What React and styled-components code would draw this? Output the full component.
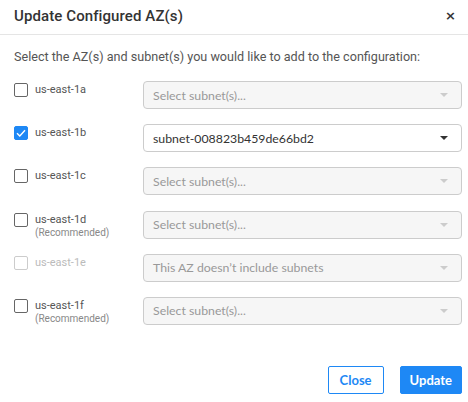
import React from "react";
import styled, { createGlobalStyle } from "styled-components";

const Global = createGlobalStyle`
  html, body { margin: 0; padding: 0; background: #fff; }
  body { font-family: Roboto, "Liberation Sans", sans-serif; }
  * { box-sizing: border-box; }
`;

const Modal = styled.div`
  width: 468px;
  height: 402px;
  display: flex;
  flex-direction: column;
  background: #fff;
`;

const Header = styled.div`
  height: 35px;
  display: flex;
  align-items: center;
  justify-content: space-between;
  padding: 0 12px 3px 14px;
  border-bottom: 1px solid #e5e5e5;
`;

const Title = styled.h1`
  margin: 0;
  font-family: Roboto, sans-serif;
  font-weight: 500;
  font-size: 15px;
  color: #333;
  letter-spacing: 0.1px;
`;

const CloseX = styled.span`
  font-family: "DejaVu Sans", sans-serif;
  font-size: 13px;
  color: #333;
  font-weight: bold;
  line-height: 1;
`;

const Body = styled.div`
  padding: 14px 6px 0 14px;
  display: flex;
  flex-direction: column;
`;

const Intro = styled.p`
  margin: 0 0 17px;
  font-size: 12.6px;
  line-height: 15px;
  color: #555;
`;

const Rows = styled.div`
  display: flex;
  flex-direction: column;
  gap: 15.2px;
`;

const Row = styled.div`
  display: flex;
  align-items: flex-start;
  height: 28px;
`;

const AzCell = styled.label`
  width: 129px;
  display: flex;
  align-items: flex-start;
  padding-top: 2px;
  gap: 7px;
`;

const Box = styled.span`
  width: 14px;
  height: 14px;
  flex: none;
  border-radius: 2px;
  border: 1px solid ${(p) => (p.$checked ? "#1e88f5" : p.$disabled ? "#ccc" : "#666")};
  background: ${(p) => (p.$checked ? "#1e88f5" : "#fff")};
  display: flex;
  align-items: center;
  justify-content: center;
`;

const AzText = styled.div`
  display: flex;
  flex-direction: column;
  font-size: 11px;
  line-height: 13px;
  color: ${(p) => (p.$disabled ? "#bbb" : "#555")};
`;

const Rec = styled.span`
  font-size: 10px;
  color: #888;
`;

const Select = styled.div`
  width: 319px;
  height: 28px;
  border: 1px solid #ccc;
  border-radius: 4px;
  background: ${(p) => (p.$disabled ? "#f6f6f6" : "#fff")};
  display: flex;
  align-items: center;
  justify-content: space-between;
  padding: 0 13px 0 9px;
  font-family: Lato, sans-serif;
  font-size: 12.3px;
  color: ${(p) => (p.$disabled ? "#999" : "#333")};
`;

const Caret = styled.span`
  width: 0;
  height: 0;
  border-left: 4px solid transparent;
  border-right: 4px solid transparent;
  border-top: 4px solid ${(p) => (p.$disabled ? "#ccc" : "#333")};
`;

const Footer = styled.div`
  margin-top: auto;
  display: flex;
  justify-content: flex-end;
  gap: 16px;
  padding: 0 6px 8px 0;
`;

const Button = styled.button`
  height: 28px;
  padding: 0 ${(p) => (p.$primary ? "9px" : "11px")};
  border-radius: 2px;
  border: 1px solid #1e88f5;
  background: ${(p) => (p.$primary ? "#1e88f5" : "#fff")};
  color: ${(p) => (p.$primary ? "#fff" : "#1e88f5")};
  font-family: Lato, sans-serif;
  font-weight: 700;
  font-size: 13px;
`;

const azs = [
  { name: "us-east-1a" },
  { name: "us-east-1b", checked: true, value: "subnet-008823b459de66bd2" },
  { name: "us-east-1c" },
  { name: "us-east-1d", rec: true },
  { name: "us-east-1e", disabled: true, value: "This AZ doesn\u2019t include subnets" },
  { name: "us-east-1f", rec: true },
];

const Check = () => (
  <svg width="10" height="8" viewBox="0 0 10 8">
    <path d="M1 4.2 L3.8 7 L9 1.2" fill="none" stroke="#fff" strokeWidth="1.4" />
  </svg>
);

export default function App() {
  return (
    <>
      <Global />
      <Modal>
        <Header>
          <Title>Update Configured AZ(s)</Title>
          <CloseX>×</CloseX>
        </Header>
        <Body>
          <Intro>Select the AZ(s) and subnet(s) you would like to add to the configuration:</Intro>
          <Rows>
            {azs.map((az) => {
              const selDisabled = !az.checked;
              return (
                <Row key={az.name}>
                  <AzCell>
                    <Box $checked={az.checked} $disabled={az.disabled}>
                      {az.checked && <Check />}
                    </Box>
                    <AzText $disabled={az.disabled}>
                      <span>{az.name}</span>
                      {az.rec && <Rec>(Recommended)</Rec>}
                    </AzText>
                  </AzCell>
                  <Select $disabled={selDisabled}>
                    <span>{az.value || "Select subnet(s)..."}</span>
                    <Caret $disabled={selDisabled} />
                  </Select>
                </Row>
              );
            })}
          </Rows>
        </Body>
        <Footer>
          <Button>Close</Button>
          <Button $primary>Update</Button>
        </Footer>
      </Modal>
    </>
  );
}
